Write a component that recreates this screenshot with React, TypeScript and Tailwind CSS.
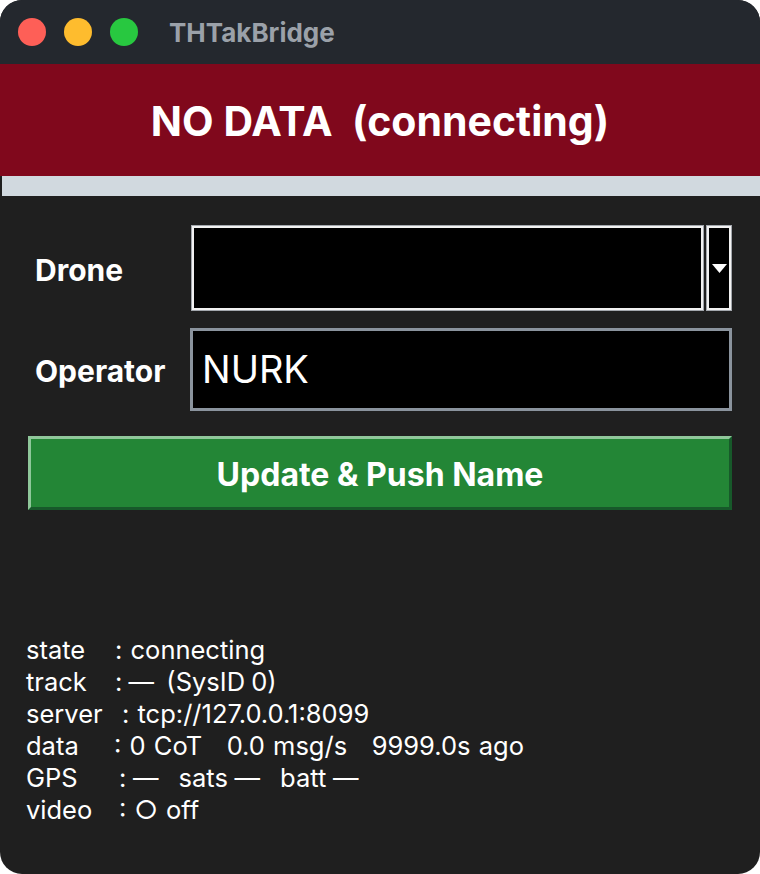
const statusLines = [
  { label: 'state', w: 'w-[89px]', rest: ': connecting', ws: '[word-spacing:1px]' },
  { label: 'track', w: 'w-[89px]', rest: ': —  (SysID 0)', ws: '[word-spacing:-1px]' },
  { label: 'server', w: 'w-[96px]', rest: ': tcp://127.0.0.1:8099', ws: '[word-spacing:1px]' },
  { label: 'data', w: 'w-[88px]', rest: ': 0 CoT   0.0 msg/s   9999.0s ago', ws: '[word-spacing:1px]' },
  { label: 'GPS', w: 'w-[93px]', rest: ': —   sats —   batt —', ws: '[word-spacing:-0.5px]' },
  { label: 'video', w: 'w-[93px]', rest: ': ○ off', ws: '[word-spacing:1px]' },
]

function TitleBar() {
  return (
    <div className="flex h-16 items-center bg-[#24282e] pl-[18px]">
      <div className="flex gap-[18px]">
        <span className="h-7 w-7 rounded-full bg-[#fe5f57]" />
        <span className="h-7 w-7 rounded-full bg-[#febc2e]" />
        <span className="h-7 w-7 rounded-full bg-[#28c840]" />
      </div>
      <span className="ml-[31px] text-[26px] font-bold text-[#9ba1a9]">THTakBridge</span>
    </div>
  )
}

export default function App() {
  return (
    <div className="min-h-screen bg-white">
      <div className="flex h-[874px] w-[760px] flex-col overflow-hidden rounded-[22px] bg-[#1f1f1f] font-['Inter',sans-serif]">
        <TitleBar />

        <div className="flex h-[112px] items-center justify-center bg-[#80081c] pt-1">
          <span className="whitespace-pre text-[41px] font-bold text-white">NO DATA  (connecting)</span>
        </div>
        <div className="ml-[2px] h-5 bg-[#d1d9df]" />

        <div className="flex flex-col px-7 pt-[29px]">
          <div className="flex items-center">
            <span className="w-[163px] pl-[7px] pt-1 text-[30px] font-bold text-white">Drone</span>
            <div className="flex h-[86px] flex-1 gap-[2px]">
              <div className="flex-1 border border-[#a3a7ad] bg-black">
                <div className="h-full w-full border-2 border-[#f2f2f2]" />
              </div>
              <div className="flex w-[26px] items-center justify-center border border-[#a3a7ad] bg-black">
                <div className="flex h-full w-full items-center justify-center border-2 border-[#f2f2f2]">
                  <svg width="15" height="9" viewBox="0 0 15 9">
                    <path d="M0 0h15L7.5 9z" fill="white" />
                  </svg>
                </div>
              </div>
            </div>
          </div>

          <div className="mt-[17px] flex items-center">
            <span className="w-[162px] pl-[7px] pt-1 text-[30px] font-bold text-white">Operator</span>
            <div className="flex h-[83px] flex-1 items-center border-[3px] border-[#8a939d] bg-black pl-[9px]">
              <span className="text-[38px] text-white">NURK</span>
            </div>
          </div>

          <button className="mt-[25px] flex h-[74px] items-center justify-center border-[3px] border-t-[#8fc79a] border-l-[#8fc79a] border-b-[#17592a] border-r-[#17592a] bg-[#238636] pt-1">
            <span className="text-[32px] font-bold text-white">Update &amp; Push Name</span>
          </button>
        </div>

        <div className="mt-[124px] flex flex-col pl-[26px] text-[25.5px] leading-[32px] text-white">
          {statusLines.map((line) => (
            <div key={line.label} className="flex whitespace-pre">
              <span className={line.w}>{line.label}</span>
              <span className={line.ws}>{line.rest}</span>
            </div>
          ))}
        </div>
      </div>
    </div>
  )
}
